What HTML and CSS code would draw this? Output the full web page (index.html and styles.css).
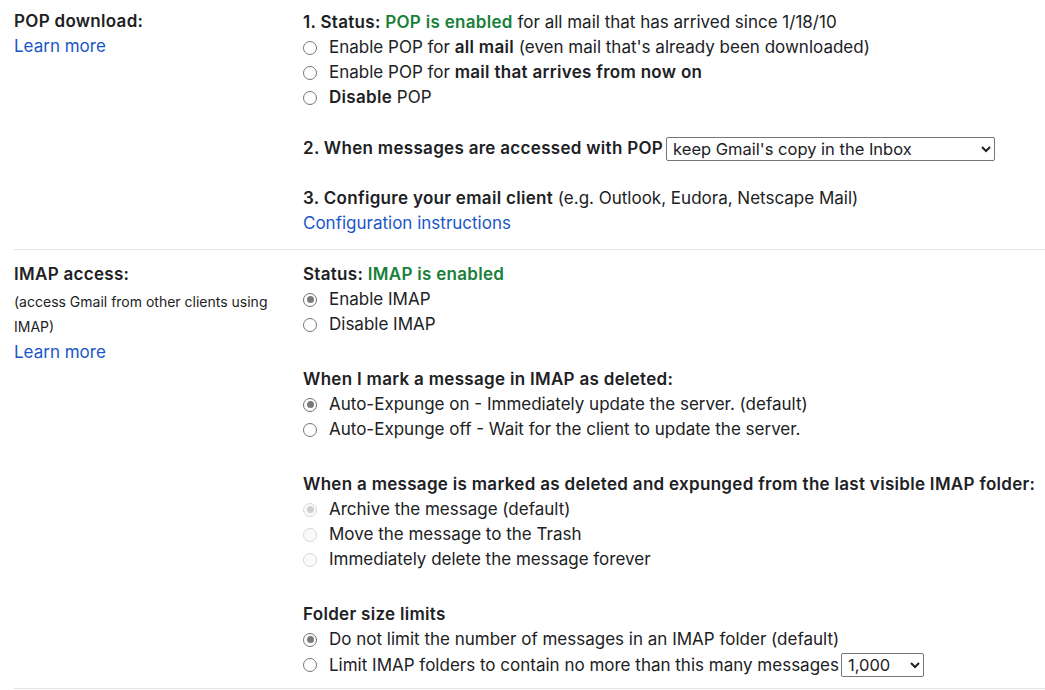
FILE: index.html
```html
<!DOCTYPE html>
<html>
<head>
<meta charset="utf-8">
<link rel="stylesheet" href="styles.css">
</head>
<body>
<div class="settings">
  <div class="row row-pop">
    <div class="label-col">
      <div class="label">POP download:</div>
      <a class="link" href="#">Learn more</a>
    </div>
    <div class="value-col">
      <div class="block">
        <div class="line first"><b>1. Status: </b><b class="green">POP is enabled</b> for all mail that has arrived since 1/18/10</div>
        <label class="opt"><input type="radio" name="pop"><span>Enable POP for <b>all mail</b> (even mail that's already been downloaded)</span></label>
        <label class="opt"><input type="radio" name="pop"><span>Enable POP for <b>mail that arrives from now on</b></span></label>
        <label class="opt"><input type="radio" name="pop"><span><b>Disable</b> POP</span></label>
      </div>
      <div class="block gap-26">
        <div class="line"><b>2. When messages are accessed with POP</b>
          <select class="sel sel-wide"><option>keep Gmail's copy in the Inbox</option></select>
        </div>
      </div>
      <div class="block gap-25">
        <div class="line"><b>3. Configure your email client</b> (e.g. Outlook, Eudora, Netscape Mail)</div>
        <div class="line"><a class="link" href="#">Configuration instructions</a></div>
      </div>
    </div>
  </div>
  <div class="row row-imap">
    <div class="label-col">
      <div class="label">IMAP access:</div>
      <div class="sub">(access Gmail from other clients using IMAP)</div>
      <a class="link" href="#">Learn more</a>
    </div>
    <div class="value-col">
      <div class="block">
        <div class="line"><b>Status: </b><b class="green">IMAP is enabled</b></div>
        <label class="opt"><input type="radio" name="imap" checked><span>Enable IMAP</span></label>
        <label class="opt"><input type="radio" name="imap"><span>Disable IMAP</span></label>
      </div>
      <div class="block gap-30">
        <div class="line"><b>When I mark a message in IMAP as deleted:</b></div>
        <label class="opt"><input type="radio" name="exp" checked><span>Auto-Expunge on - Immediately update the server. (default)</span></label>
        <label class="opt"><input type="radio" name="exp"><span>Auto-Expunge off - Wait for the client to update the server.</span></label>
      </div>
      <div class="block gap-30">
        <div class="line"><b>When a message is marked as deleted and expunged from the last visible IMAP folder:</b></div>
        <label class="opt"><input type="radio" name="del" checked disabled><span>Archive the message (default)</span></label>
        <label class="opt"><input type="radio" name="del" disabled><span>Move the message to the Trash</span></label>
        <label class="opt"><input type="radio" name="del" disabled><span>Immediately delete the message forever</span></label>
      </div>
      <div class="block gap-30">
        <div class="line"><b>Folder size limits</b></div>
        <label class="opt"><input type="radio" name="lim" checked><span>Do not limit the number of messages in an IMAP folder (default)</span></label>
        <label class="opt opt-tall"><input type="radio" name="lim"><span>Limit IMAP folders to contain no more than this many messages</span>
          <select class="sel sel-small"><option>1,000</option></select></label>
      </div>
    </div>
  </div>
</div>
</body>
</html>
```

FILE: styles.css
```css
html, body {
  margin: 0;
  padding: 0;
  background: #fff;
}
body {
  font-family: Inter, "Open Sans", Arial, sans-serif;
  font-size: 17px;
  color: #202124;
  line-height: 25px;
}
.settings {
  margin-left: 14px;
}
.row {
  display: grid;
  grid-template-columns: 289px 1fr;
  border-bottom: 1px solid #e3e3e3;
}
.row-pop {
  padding: 9px 0 13px;
}
.row-imap {
  padding: 12px 0 10px;
}
b {
  font-weight: 600;
  letter-spacing: 0.3px;
}
.label {
  font-weight: 600;
  letter-spacing: 0.3px;
}
.sub {
  font-size: 14px;
  line-height: 25px;
  margin-top: 2px;
  margin-bottom: 1px;
  color: #222;
  padding-right: 8px;
}
.link {
  color: #1a56c8;
  text-decoration: none;
  display: inline-block;
}
.green {
  color: #188038;
}
.line {
  display: flex;
  align-items: center;
  white-space: pre;
  min-height: 25px;
}
.line.first {
  min-height: 26px;
}
.gap-25 { margin-top: 25px; }
.gap-26 { margin-top: 26px; }
.gap-30 { margin-top: 30px; }
.opt {
  display: flex;
  align-items: center;
  height: 25px;
  white-space: pre;
}
.opt-tall {
  height: 26px;
}
.opt input {
  appearance: none;
  -webkit-appearance: none;
  width: 14px;
  height: 14px;
  margin: 0 12px 0 0;
  border: 1px solid #767676;
  border-radius: 50%;
  background: #fff;
  box-sizing: border-box;
  flex: none;
  position: relative;
}
.opt input:checked {
  border-color: #6f6f6f;
}
.opt input:checked::after {
  content: "";
  position: absolute;
  left: 2.5px;
  top: 2.5px;
  width: 7px;
  height: 7px;
  border-radius: 50%;
  background: #7a7a7a;
}
.opt input:disabled {
  border-color: #d8d8d8;
  background: #fafafa;
}
.opt input:disabled:checked::after {
  background: #cfcfcf;
}
.sel {
  font-family: Inter, "Open Sans", Arial, sans-serif;
  font-size: 16.5px;
  color: #202124;
  height: 24px;
  border: 1px solid #767676;
  border-radius: 2px;
  background: #fff;
  padding: 0 2px;
  margin-left: 3px;
}
.sel-wide {
  width: 329px;
}
.sel-small {
  width: 83px;
  margin-left: 2px;
}
```
